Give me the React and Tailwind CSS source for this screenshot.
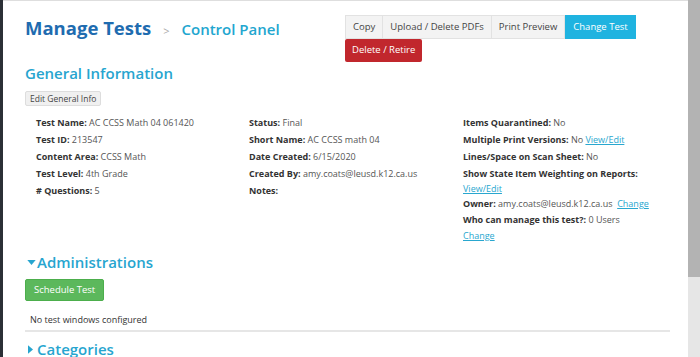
import React from 'react'

const Row = ({ label, children }) => (
  <div className='leading-[17px] h-[17px] whitespace-nowrap'>
    <span className='font-bold text-[#333]'>{label}</span> <span className='text-[#555]'>{children}</span>
  </div>
)

const LinkText = ({ children }) => (
  <a href='#' className='text-[#29a7cf] underline'>{children}</a>
)

const App = () => {
  return (
    <div className='flex w-[700px] h-[357px] overflow-hidden bg-white' style={{ fontFamily: '"Open Sans", sans-serif' }}>
      <div className='w-[3px] shrink-0 bg-[#2b3036]'></div>

      <div className='flex-1 flex flex-col min-w-0'>
        <div className='h-[4px] bg-[#f2f2f2] border-b border-[#dedede]'></div>

        <div className='pl-[22px] pr-[18px]'>
          {/* header */}
          <div className='flex items-start'>
            <div className='flex items-baseline pt-[15px] w-[320px] shrink-0 whitespace-nowrap'>
              <h1 className='text-[18.5px] font-bold text-[#1f6cb0] leading-[24px]'>Manage Tests</h1>
              <span className='text-[#aaa] text-[11px] mx-[12px]'>&gt;</span>
              <span className='text-[15px] font-semibold text-[#22a6cf]'>Control Panel</span>
            </div>
            <div className='pt-[14px] text-[9.5px] whitespace-nowrap shrink-0'>
              <div className='flex'>
                <button className='h-[24px] px-[7px] bg-[#f3f3f3] border border-[#e2e2e2] text-[#444]'>Copy</button>
                <button className='h-[24px] px-[7px] bg-[#f3f3f3] border border-[#e2e2e2] border-l-0 text-[#444]'>Upload / Delete PDFs</button>
                <button className='h-[24px] px-[7px] bg-[#f3f3f3] border border-[#e2e2e2] border-l-0 text-[#444]'>Print Preview</button>
                <button className='h-[24px] px-[8px] bg-[#1fb3e0] text-white'>Change Test</button>
              </div>
              <button className='h-[23px] px-[7px] bg-[#c1272d] text-white rounded-[2px]'>Delete / Retire</button>
            </div>
          </div>

          {/* general info */}
          <h2 className='text-[15px] font-semibold text-[#27a5cf] leading-[22px]'>General Information</h2>
          <button className='mt-[2px] h-[15px] px-[4px] text-[8.5px] leading-[13px] text-[#444] bg-[#f0f0f0] border border-[#ddd] rounded-[2px]'>Edit General Info</button>

          <div className='grid grid-cols-[213px_214px_1fr] pl-[11px] mt-[6px] text-[9px]'>
            <div>
              <Row label='Test Name:'>AC CCSS Math 04 061420</Row>
              <Row label='Test ID:'>213547</Row>
              <Row label='Content Area:'>CCSS Math</Row>
              <Row label='Test Level:'>4th Grade</Row>
              <Row label='# Questions:'>5</Row>
            </div>
            <div>
              <Row label='Status:'>Final</Row>
              <Row label='Short Name:'>AC CCSS math 04</Row>
              <Row label='Date Created:'>6/15/2020</Row>
              <Row label='Created By:'>amy.coats@leusd.k12.ca.us</Row>
              <Row label='Notes:'></Row>
            </div>
            <div>
              <Row label='Items Quarantined:'>No</Row>
              <Row label='Multiple Print Versions:'>No <LinkText>View/Edit</LinkText></Row>
              <Row label='Lines/Space on Scan Sheet:'>No</Row>
              <Row label='Show State Item Weighting on Reports:'></Row>
              <div className='leading-[14px] h-[14px]'><LinkText>View/Edit</LinkText></div>
              <div className='leading-[15px] h-[15px] whitespace-nowrap'>
                <span className='font-bold text-[#333]'>Owner:</span> <span className='text-[#555]'>amy.coats@leusd.k12.ca.us</span>&nbsp; <LinkText>Change</LinkText>
              </div>
              <Row label='Who can manage this test?:'>0 Users</Row>
              <div className='leading-[15px] h-[15px]'><LinkText>Change</LinkText></div>
            </div>
          </div>

          {/* administrations */}
          <h2 className='mt-[8px] flex items-center text-[15px] font-semibold text-[#27a5cf] leading-[22px]'>
            <svg width='9' height='5' viewBox='0 0 10 6' className='mr-[1px] ml-[2px]'><path d='M0 0h10L5 6z' fill='#27a5cf' /></svg>
            Administrations
          </h2>
          <button className='mt-[6px] h-[22px] px-[8px] text-[9.5px] text-white bg-[#5cb85c] border border-[#4cae4c] rounded-[2px]'>Schedule Test</button>
          <div className='mt-[12px] pl-[5px] text-[9px] leading-[14px] text-[#333]'>No test windows configured</div>
          <div className='mt-[3px] h-[2px] bg-[#e6e6e6]'></div>
          <h2 className='mt-[6px] flex items-center text-[15px] font-semibold text-[#27a5cf] leading-[22px]'>
            <svg width='5' height='9' viewBox='0 0 6 10' className='mr-[4px] ml-[3px]'><path d='M0 0v10l6-5z' fill='#27a5cf' /></svg>
            Categories
          </h2>
        </div>
      </div>

      <div className='w-[12px] shrink-0 flex flex-col bg-[#e6e6e6]'>
        <div className='h-[277px] bg-[#b3b3b3]'></div>
      </div>
    </div>
  )
}

export default App
